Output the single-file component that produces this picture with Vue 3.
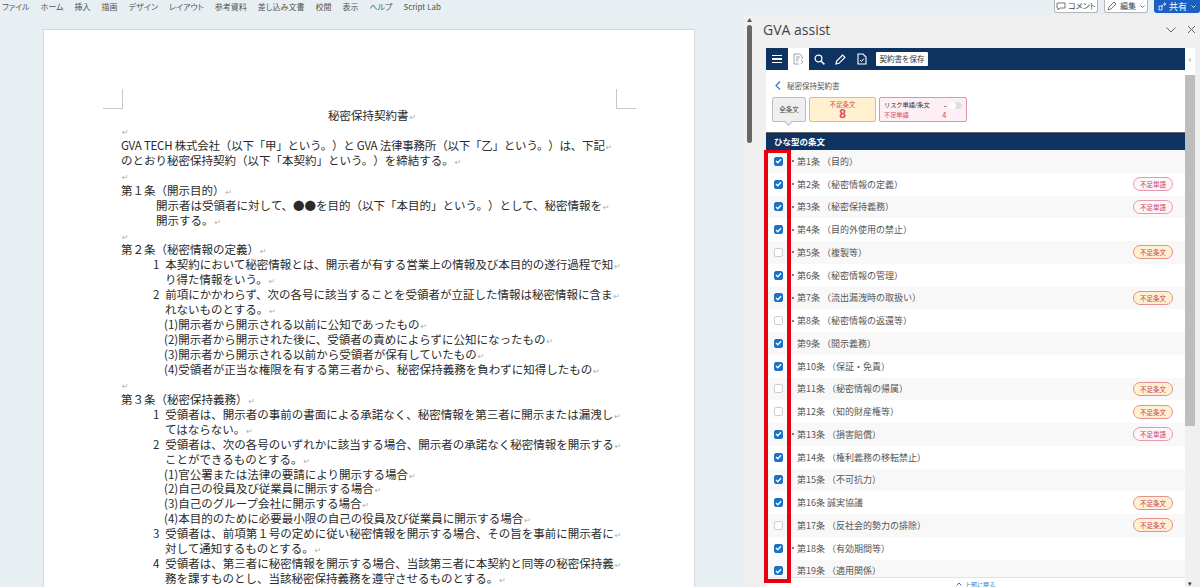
<template>
  <div class="word">
    <div class="topbar">
      <div class="menu">
        <span v-for="m in menus" :key="m">{{ m }}</span>
      </div>
      <div class="top-actions">
        <button class="top-btn comment">
          <svg width="10" height="9" viewBox="0 0 10 9"><path d="M1 1h8v5H4L2 8V6H1z" fill="none" stroke="#555" stroke-width=".8" /></svg>
          <span>コメント</span>
        </button>
        <button class="top-btn edit">
          <svg width="11" height="10" viewBox="0 0 11 10"><path d="M1 9l1-3 5-5 2 2-5 5z" fill="none" stroke="#555" stroke-width=".8" /></svg>
          <span>編集</span>
          <svg class="caret" width="5" height="3" viewBox="0 0 5 3"><path d="M.5.5L2.500 2.500 4.500.5" fill="none" stroke="#555" stroke-width=".8" /></svg>
        </button>
        <button class="top-btn share">
          <svg width="9" height="9" viewBox="0 0 9 9"><path d="M1 4h3v4H1zM4 5c0-2 1-3 3-3M6 0.5L8 2 6 3.500" fill="none" stroke="#fff" stroke-width=".8" /></svg>
          <span>共有</span>
          <svg class="caret" width="5" height="3" viewBox="0 0 5 3"><path d="M.5.5L2.500 2.500 4.500.5" fill="none" stroke="#fff" stroke-width=".8" /></svg>
        </button>
      </div>
    </div>

    <div class="workspace">
      <div class="doc-area">
        <div class="page">
          <div class="crop-marks">
            <span class="crop left"></span>
            <span class="crop right"></span>
          </div>
          <div class="doc-body">
            <p v-for="(line, i) in docLines" :key="i" class="line" :class="line.cls">{{ line.text }}<span class="para">↵</span></p>
          </div>
        </div>
      </div>

      <div class="doc-scroll">
        <span class="arrow">▲</span>
        <span class="thumb"></span>
      </div>

      <section class="pane">
        <header class="pane-title">
          <h1>GVA assist</h1>
          <div class="pane-ctrl">
            <svg width="10" height="6" viewBox="0 0 10 6"><path d="M.5.5L5 5 9.500.5" fill="none" stroke="#666" /></svg>
            <svg width="9" height="9" viewBox="0 0 9 9"><path d="M1 1l7 7M8 1L1 8" stroke="#666" /></svg>
          </div>
        </header>

        <div class="pane-body">
          <div class="app">
            <nav class="nav">
              <div class="nav-item burger"><span></span><span></span><span></span></div>
              <div class="nav-item active">
                <svg width="11" height="12" viewBox="0 0 11 12"><path d="M1 1h6l2 2v3M1 1v10h5M3 4h4M3 6h3M3 8h2M8 7l2 2-2 2" fill="none" stroke="#9aa3ad" stroke-width="1" /></svg>
              </div>
              <div class="nav-item">
                <svg width="11" height="11" viewBox="0 0 11 11"><circle cx="4.500" cy="4.500" r="3.400" fill="none" stroke="#fff" stroke-width="1.300" /><path d="M7 7l3.400 3.400" stroke="#fff" stroke-width="1.500" /></svg>
              </div>
              <div class="nav-item">
                <svg width="11" height="11" viewBox="0 0 11 11"><path d="M1 10l.7-3L7.600 1.100 9.900 3.400 4 9.300z" fill="none" stroke="#fff" stroke-width="1.200" /></svg>
              </div>
              <div class="nav-item">
                <svg width="10" height="12" viewBox="0 0 10 12"><path d="M1 1h5l3 3v7H1z" fill="none" stroke="#fff" stroke-width="1.100" /><path d="M3 7l1.500 1.500L7 5.500" fill="none" stroke="#fff" /></svg>
              </div>
              <button class="save-btn">契約書を保存</button>
            </nav>

            <div class="summary">
              <div class="breadcrumb">
                <svg width="6" height="9" viewBox="0 0 6 9"><path d="M5 .5L1 4.500 5 8.500" fill="none" stroke="#3a78c2" stroke-width="1.200" /></svg>
                <span>秘密保持契約書</span>
              </div>
              <div class="cards">
                <div class="card all">全条文</div>
                <div class="card lack">
                  <span>不足条文</span>
                  <b>8</b>
                </div>
                <div class="card risk">
                  <div class="risk-row">
                    <span class="risk-label">リスク単語/条文</span>
                    <span class="risk-dash">-</span>
                    <span class="toggle"></span>
                  </div>
                  <div class="risk-row">
                    <span class="risk-lack">不足単語</span>
                    <span class="risk-num">4</span>
                  </div>
                </div>
              </div>
            </div>

            <div class="section-head">ひな型の条文</div>

            <ul class="articles">
              <li v-for="a in articles" :key="a.no" class="article">
                <span class="check" :class="{ on: a.on }">
                  <svg v-if="a.on" width="7" height="6" viewBox="0 0 7 6"><path d="M1 3l1.800 1.800L6 1.200" fill="none" stroke="#fff" stroke-width="1.300" /></svg>
                </span>
                <span class="mark"><i v-if="a.mark"></i></span>
                <span class="article-name">{{ a.title }}</span>
                <span v-if="a.tag" class="tag" :class="a.tag === '不足条文' ? 'tag-article' : 'tag-word'">{{ a.tag }}</span>
              </li>
            </ul>

            <div class="back-top">
              <svg width="6" height="4" viewBox="0 0 6 4"><path d="M.5 3.500L3 1l2.500 2.500" fill="none" stroke="#2f78c4" /></svg>
              <span>上部に戻る</span>
            </div>
          </div>

          <div class="side">
            <div class="side-tab">‹</div>
            <div class="side-thumb"></div>
            <div class="side-down">▾</div>
          </div>
        </div>

        <div class="red-box"></div>
      </section>
    </div>
  </div>
</template>

<script setup>
const menus = ['ファイル', 'ホーム', '挿入', '描画', 'デザイン', 'レイアウト', '参考資料', '差し込み文書', '校閲', '表示', 'ヘルプ', 'Script Lab']

const docLines = [
  { text: '秘密保持契約書', cls: 'center' },
  { text: '' },
  { text: 'GVA TECH 株式会社\uFF08以下「甲」という。\uFF09と GVA 法律事務所\uFF08以下「乙」という。\uFF09は、下記', cls: 'tight' },
  { text: 'のとおり秘密保持契約\uFF08以下「本契約」という。\uFF09を締結する。' },
  { text: '' },
  { text: '第\uFF11条\uFF08開示目的\uFF09' },
  { text: '開示者は受領者に対して、●●を目的\uFF08以下「本目的」という。\uFF09として、秘密情報を', cls: 'indent' },
  { text: '開示する。', cls: 'indent' },
  { text: '' },
  { text: '第\uFF12条\uFF08秘密情報の定義\uFF09' },
  { text: '1\u2002本契約において秘密情報とは、開示者が有する営業上の情報及び本目的の遂行過程で知', cls: 'num' },
  { text: 'り得た情報をいう。', cls: 'cont' },
  { text: '2\u2002前項にかかわらず、次の各号に該当することを受領者が立証した情報は秘密情報に含ま', cls: 'num' },
  { text: 'れないものとする。', cls: 'cont' },
  { text: '(1)開示者から開示される以前に公知であったもの', cls: 'sub' },
  { text: '(2)開示者から開示された後に、受領者の責めによらずに公知になったもの', cls: 'sub' },
  { text: '(3)開示者から開示される以前から受領者が保有していたもの', cls: 'sub' },
  { text: '(4)受領者が正当な権限を有する第三者から、秘密保持義務を負わずに知得したもの', cls: 'sub' },
  { text: '' },
  { text: '第\uFF13条\uFF08秘密保持義務\uFF09' },
  { text: '1\u2002受領者は、開示者の事前の書面による承諾なく、秘密情報を第三者に開示または漏洩し', cls: 'num' },
  { text: 'てはならない。', cls: 'cont' },
  { text: '2\u2002受領者は、次の各号のいずれかに該当する場合、開示者の承諾なく秘密情報を開示する', cls: 'num' },
  { text: 'ことができるものとする。', cls: 'cont' },
  { text: '(1)官公署または法律の要請により開示する場合', cls: 'sub' },
  { text: '(2)自己の役員及び従業員に開示する場合', cls: 'sub' },
  { text: '(3)自己のグループ会社に開示する場合', cls: 'sub' },
  { text: '(4)本目的のために必要最小限の自己の役員及び従業員に開示する場合', cls: 'sub' },
  { text: '3\u2002受領者は、前項第\uFF11号の定めに従い秘密情報を開示する場合、その旨を事前に開示者に', cls: 'num' },
  { text: '対して通知するものとする。', cls: 'cont' },
  { text: '4\u2002受領者は、第三者に秘密情報を開示する場合、当該第三者に本契約と同等の秘密保持義', cls: 'num' },
  { text: '務を課すものとし、当該秘密保持義務を遵守させるものとする。', cls: 'cont' }
]

const articles = [
  { no: 1, title: '第1条 \uFF08目的\uFF09', on: true, mark: true },
  { no: 2, title: '第2条 \uFF08秘密情報の定義\uFF09', on: true, mark: true, tag: '不足単語' },
  { no: 3, title: '第3条 \uFF08秘密保持義務\uFF09', on: true, mark: true, tag: '不足単語' },
  { no: 4, title: '第4条 \uFF08目的外使用の禁止\uFF09', on: true, mark: true },
  { no: 5, title: '第5条 \uFF08複製等\uFF09', on: false, mark: true, tag: '不足条文' },
  { no: 6, title: '第6条 \uFF08秘密情報の管理\uFF09', on: true, mark: true },
  { no: 7, title: '第7条 \uFF08流出漏洩時の取扱い\uFF09', on: true, mark: true, tag: '不足条文' },
  { no: 8, title: '第8条 \uFF08秘密情報の返還等\uFF09', on: false, mark: true },
  { no: 9, title: '第9条 \uFF08開示義務\uFF09', on: true },
  { no: 10, title: '第10条 \uFF08保証・免責\uFF09', on: true },
  { no: 11, title: '第11条 \uFF08秘密情報の帰属\uFF09', on: false, tag: '不足条文' },
  { no: 12, title: '第12条 \uFF08知的財産権等\uFF09', on: false, tag: '不足条文' },
  { no: 13, title: '第13条 \uFF08損害賠償\uFF09', on: true, mark: true, tag: '不足単語' },
  { no: 14, title: '第14条 \uFF08権利義務の移転禁止\uFF09', on: true },
  { no: 15, title: '第15条 \uFF08不可抗力\uFF09', on: true },
  { no: 16, title: '第16条 誠実協議', on: true, tag: '不足条文' },
  { no: 17, title: '第17条 \uFF08反社会的勢力の排除\uFF09', on: false, tag: '不足条文' },
  { no: 18, title: '第18条 \uFF08有効期間等\uFF09', on: true, mark: true },
  { no: 19, title: '第19条 \uFF08適用関係\uFF09', on: true }
]
</script>

<style>
html,
body {
  margin: 0;
  overflow: hidden;
}
</style>

<style scoped>
.word {
  width: 1200px;
  height: 587px;
  overflow: hidden;
  display: flex;
  flex-direction: column;
  background: #e8eff2;
  font-family: "Noto Sans CJK JP", "Noto Sans", sans-serif;
  color: #333;
  text-spacing-trim: space-all;
}

.topbar {
  height: 15px;
  flex: none;
  display: flex;
  justify-content: space-between;
}

.menu {
  display: flex;
  gap: 11px;
  padding: 1px 0 0 2px;
  font-size: 8px;
  line-height: 11px;
  color: #555;
  font-feature-settings: "palt";
}

.top-actions {
  display: flex;
  gap: 6px;
  align-items: flex-start;
}

.top-btn {
  height: 13px;
  padding: 0;
  display: flex;
  align-items: center;
  justify-content: center;
  gap: 2px;
  font-family: inherit;
  font-size: 8px;
  line-height: 1;
  white-space: nowrap;
  color: #444;
  background: #fff;
  border: 1px solid #b5b5b5;
  border-top: none;
  border-radius: 0 0 3px 3px;
  font-feature-settings: "palt";
}

.comment,
.edit {
  width: 44px;
}

.share {
  width: 46px;
  background: #1b5fc4;
  border-color: #1b5fc4;
  color: #fff;
  font-size: 9px;
}

.caret {
  margin-left: 2px;
}

.workspace {
  flex: 1;
  min-height: 0;
  display: flex;
}

.doc-area {
  width: 744px;
  flex: none;
  padding: 14px 0 0 43px;
  box-sizing: border-box;
}

.page {
  position: relative;
  width: 652px;
  height: 600px;
  background: #fff;
  border: 1px solid #d5d9db;
  box-sizing: border-box;
}

.crop {
  position: absolute;
  top: 59px;
  width: 19px;
  height: 19px;
  border-bottom: 1px solid #c8c8c8;
}

.crop.left {
  left: 59px;
  border-right: 1px solid #c8c8c8;
}

.crop.right {
  left: 572px;
  border-left: 1px solid #c8c8c8;
}

.doc-body {
  padding: 78px 0 0 77px;
}

.line {
  margin: 0;
  height: 14.94px;
  line-height: 14.94px;
  font-size: 11.5px;
  white-space: nowrap;
  color: #2a2a2a;
}

.tight {
  letter-spacing: -0.22px;
}

.center {
  padding-left: 207px;
}

.indent {
  padding-left: 35px;
}

.num {
  padding-left: 32px;
}

.cont {
  padding-left: 44px;
}

.sub {
  padding-left: 43px;
}

.para {
  margin-left: 1px;
  font-family: "DejaVu Sans", sans-serif;
  font-size: 8px;
  color: #a9b3ad;
}

.doc-scroll {
  width: 11px;
  flex: none;
  background: #f0f0f0;
  display: flex;
  flex-direction: column;
  align-items: center;
}

.arrow {
  font-size: 5px;
  line-height: 10px;
  color: #555;
}

.thumb {
  width: 5px;
  height: 118px;
  border-radius: 3px;
  background: #686868;
}

.pane {
  position: relative;
  flex: 1;
  min-width: 0;
  display: flex;
  flex-direction: column;
  background: #f0f0f0;
}

.pane-title {
  height: 33px;
  flex: none;
  display: flex;
  align-items: center;
  justify-content: space-between;
  padding: 0 4px 4px 8px;
  box-sizing: border-box;
}

.pane-title h1 {
  margin: 0;
  font-family: "Open Sans", sans-serif;
  font-size: 14px;
  font-weight: 400;
  color: #444;
}

.pane-ctrl {
  display: flex;
  align-items: center;
  gap: 11px;
}

.pane-body {
  flex: 1;
  min-height: 0;
  display: flex;
  padding-left: 11px;
}

.app {
  width: 419px;
  flex: none;
  display: flex;
  flex-direction: column;
  background: #fff;
}

.nav {
  height: 22px;
  flex: none;
  display: flex;
  align-items: center;
  background: #0f3360;
}

.nav-item {
  width: 21px;
  height: 22px;
  flex: none;
  display: flex;
  align-items: center;
  justify-content: center;
}

.nav-item.active {
  background: #fff;
}

.burger {
  width: 22px;
  flex-direction: column;
  gap: 2px;
}

.burger span {
  width: 10px;
  height: 1.5px;
  background: #fff;
}

.save-btn {
  width: 52px;
  height: 14px;
  margin-left: 4px;
  padding: 0;
  border: none;
  border-radius: 1px;
  background: #fff;
  color: #333;
  font-family: inherit;
  font-size: 7.5px;
  line-height: 1;
}

.summary {
  height: 62px;
  flex: none;
  box-sizing: border-box;
  padding: 9px 0 0 6px;
}

.breadcrumb {
  display: flex;
  align-items: center;
  gap: 6px;
  padding-left: 3px;
  height: 12px;
  font-size: 7.5px;
  color: #555;
}

.cards {
  display: flex;
  gap: 3px;
  margin-top: 6px;
}

.card {
  height: 25px;
  box-sizing: border-box;
  border-radius: 2px;
  font-size: 6.5px;
  line-height: 1;
}

.all {
  position: relative;
  width: 34px;
  display: flex;
  align-items: center;
  justify-content: center;
  background: #efefef;
  border: 1px solid #bdbdbd;
  color: #444;
}

.all::after {
  content: "";
  position: absolute;
  left: 13px;
  bottom: -4px;
  width: 5px;
  height: 5px;
  background: #efefef;
  border-right: 1px solid #bdbdbd;
  border-bottom: 1px solid #bdbdbd;
  transform: rotate(45deg);
  box-sizing: border-box;
}

.lack {
  width: 67px;
  display: flex;
  flex-direction: column;
  align-items: center;
  justify-content: center;
  background: #fff1cf;
  border: 1px solid #ecbb6a;
  color: #db4a64;
}

.lack span {
  line-height: 8px;
}

.lack b {
  font-family: "Liberation Sans", sans-serif;
  font-size: 12px;
  line-height: 12px;
  font-weight: 700;
}

.risk {
  width: 88px;
  padding: 2px 4px;
  background: #fdeff3;
  border: 1px solid #dd93a8;
}

.risk-row {
  display: flex;
  align-items: center;
  height: 10px;
}

.risk-label {
  width: 60px;
  color: #333;
  white-space: nowrap;
  font-size: 6.2px;
}

.risk-dash {
  width: 5px;
  font-weight: 700;
  color: #333;
}

.toggle {
  position: relative;
  width: 13px;
  height: 7px;
  border-radius: 4px;
  background: #dfdfdf;
}

.toggle::before {
  content: "";
  position: absolute;
  left: 0;
  top: 0;
  width: 7px;
  height: 7px;
  border-radius: 50%;
  background: #fff;
}

.risk-lack {
  width: 58px;
  font-size: 6.2px;
  color: #db4a64;
}

.risk-num {
  color: #db4a64;
  font-size: 8px;
}

.section-head {
  height: 18px;
  flex: none;
  box-sizing: border-box;
  padding-left: 8px;
  background: #0f3360;
  border-top: 1px solid #666;
  color: #fff;
  font-size: 8.5px;
  font-weight: 700;
  line-height: 16px;
}

.articles {
  list-style: none;
  margin: 0;
  padding: 0;
  flex: 1;
  min-height: 0;
  overflow: hidden;
}

.article {
  height: 22.75px;
  display: flex;
  align-items: center;
  padding: 0 12px 0 8px;
  box-sizing: border-box;
}

.article:nth-child(odd) {
  background: #f8f8f8;
}

.check {
  width: 9px;
  height: 9px;
  flex: none;
  box-sizing: border-box;
  display: flex;
  align-items: center;
  justify-content: center;
  background: #fff;
  border: 1px solid #cfcfcf;
  border-radius: 2px;
}

.check.on {
  background: #1a73c4;
  border-color: #1a73c4;
}

.mark {
  width: 14px;
  flex: none;
  display: flex;
  padding-left: 9px;
  box-sizing: border-box;
}

.mark i {
  width: 2px;
  height: 2px;
  background: #555;
  border-radius: 50%;
}

.article-name {
  flex: 1;
  font-size: 9px;
  color: #555;
  white-space: nowrap;
}

.tag {
  width: 40px;
  height: 14px;
  flex: none;
  box-sizing: border-box;
  border-radius: 7px;
  font-size: 6.5px;
  line-height: 12px;
  text-align: center;
  color: #c9405c;
}

.tag-article {
  background: #fff1cf;
  border: 1px solid #e39090;
}

.tag-word {
  background: #fff5f7;
  border: 1px solid #e39aac;
}

.back-top {
  height: 10px;
  flex: none;
  display: flex;
  align-items: center;
  justify-content: center;
  gap: 3px;
  padding-top: 3px;
  background: #fff;
  border-top: 1px solid #e2e2e2;
  box-sizing: border-box;
  font-size: 6.2px;
  line-height: 7px;
  color: #2f78c4;
}

.side {
  width: 10px;
  flex: none;
  display: flex;
  flex-direction: column;
}

.side-tab {
  height: 27px;
  background: #fff;
  color: #777;
  font-size: 9px;
  line-height: 24px;
  text-align: center;
}

.side-thumb {
  height: 351px;
  background: #bdbdbd;
}

.side-down {
  margin-top: auto;
  font-size: 7px;
  line-height: 7px;
  text-align: center;
  color: #333;
}

.red-box {
  position: absolute;
  left: 9px;
  top: 135px;
  width: 27px;
  height: 433px;
  box-sizing: border-box;
  border: 4px solid #e60012;
  border-top-width: 3px;
  pointer-events: none;
}
</style>
